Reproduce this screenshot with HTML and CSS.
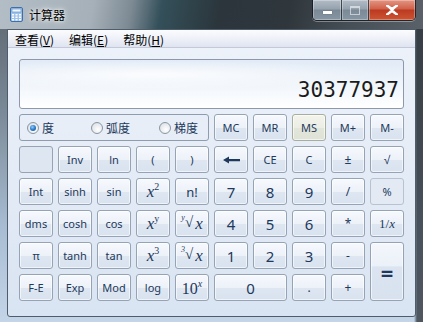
FILE: index.html
```html
<!DOCTYPE html>
<html lang="zh-CN">
<head>
    <meta charset="UTF-8">
    <title>计算器</title>
    <link rel="stylesheet" href="styles.css">
</head>
<body>
    <div class="window">
        <!-- Barre de titre -->
        <div class="titlebar">
            <svg class="app-icon" width="13" height="15" viewBox="0 0 13 15">
                <rect x="0.5" y="0.5" width="12" height="14" rx="1.5" fill="#9fc3ea" stroke="#3f6fa8"/>
                <rect x="2" y="2" width="9" height="3" fill="#eef6ff" stroke="#5c86b8" stroke-width="0.6"/>
                <g fill="#ffffff">
                    <rect x="2" y="7" width="2" height="1.5"/><rect x="5.5" y="7" width="2" height="1.5"/><rect x="9" y="7" width="2" height="1.5"/>
                    <rect x="2" y="9.5" width="2" height="1.5"/><rect x="5.5" y="9.5" width="2" height="1.5"/><rect x="9" y="9.5" width="2" height="1.5"/>
                    <rect x="2" y="12" width="2" height="1.5"/><rect x="5.5" y="12" width="2" height="1.5"/><rect x="9" y="12" width="2" height="1.5"/>
                </g>
            </svg>
            <span class="title">计算器</span>
            <div class="caption-buttons">
                <div class="cap cap-min"><span class="min-glyph"></span></div>
                <div class="cap cap-max"><span class="max-glyph"></span></div>
                <div class="cap cap-close">
                    <svg width="12" height="10" viewBox="0 0 12 10">
                        <path d="M1 0.5 L6 4 L11 0.5 M1 9.5 L6 6 L11 9.5 M2 1 L10 9 M10 1 L2 9" stroke="#ffffff" stroke-width="2.4" fill="none" stroke-linecap="round"/>
                    </svg>
                </div>
            </div>
        </div>

        <div class="client">
            <div class="menubar">
                <span class="menu">查看(<u>V</u>)</span>
                <span class="menu">编辑(<u>E</u>)</span>
                <span class="menu">帮助(<u>H</u>)</span>
            </div>

            <div class="content">
                <div class="display">30377937</div>

                <div class="keys">
                    <div class="angle">
                        <label class="radio r1"><span class="dot checked"></span>度</label>
                        <label class="radio r2"><span class="dot"></span>弧度</label>
                        <label class="radio r3"><span class="dot"></span>梯度</label>
                    </div>
                    <button class="key">MC</button>
                    <button class="key">MR</button>
                    <button class="key hot">MS</button>
                    <button class="key">M+</button>
                    <button class="key">M-</button>

                    <button class="key flat"></button>
                    <button class="key">Inv</button>
                    <button class="key">ln</button>
                    <button class="key">(</button>
                    <button class="key">)</button>
                    <button class="key">
                        <svg width="17" height="8" viewBox="0 0 17 8"><path d="M0 4 L6 0.5 V3 H17 V5.2 H6 V7.5 Z" fill="#1e395b"/></svg>
                    </button>
                    <button class="key">CE</button>
                    <button class="key">C</button>
                    <button class="key op">±</button>
                    <button class="key op">√</button>

                    <button class="key">Int</button>
                    <button class="key">sinh</button>
                    <button class="key">sin</button>
                    <button class="key"><span class="m">x<sup>2</sup></span></button>
                    <button class="key big">n!</button>
                    <button class="key num">7</button>
                    <button class="key num">8</button>
                    <button class="key num">9</button>
                    <button class="key op">/</button>
                    <button class="key flat light">%</button>

                    <button class="key">dms</button>
                    <button class="key">cosh</button>
                    <button class="key">cos</button>
                    <button class="key"><span class="m">x<sup>y</sup></span></button>
                    <button class="key"><span class="root"><sup>y</sup>√<i>x</i></span></button>
                    <button class="key num">4</button>
                    <button class="key num">5</button>
                    <button class="key num">6</button>
                    <button class="key op">*</button>
                    <button class="key"><span class="inv">1/<i>x</i></span></button>

                    <button class="key">π</button>
                    <button class="key">tanh</button>
                    <button class="key">tan</button>
                    <button class="key"><span class="m">x<sup>3</sup></span></button>
                    <button class="key"><span class="root"><sup>3</sup>√<i>x</i></span></button>
                    <button class="key num">1</button>
                    <button class="key num">2</button>
                    <button class="key num">3</button>
                    <button class="key op">-</button>
                    <button class="key equals">=</button>

                    <button class="key">F-E</button>
                    <button class="key">Exp</button>
                    <button class="key">Mod</button>
                    <button class="key">log</button>
                    <button class="key"><span class="ten">10<sup>x</sup></span></button>
                    <button class="key num zero">0</button>
                    <button class="key op">.</button>
                    <button class="key op">+</button>
                </div>
            </div>
        </div>
    </div>
</body>
</html>
```

FILE: styles.css
```css
/* Fenêtre */
body {
    margin: 0;
    width: 423px;
    height: 322px;
    overflow: hidden;
    font-family: "Noto Sans", "Noto Sans CJK SC", sans-serif;
}

.window {
    width: 423px;
    height: 322px;
    display: flex;
    flex-direction: column;
    box-sizing: border-box;
    background:
        linear-gradient(to right, rgba(0,0,0,0) 414px, rgba(40,46,52,0.75) 417px),
        linear-gradient(to bottom, #5a646d 0%, #7b8a98 35%, #a7bcd2 70%, #c4d5e8 100%);
}

/* Barre de titre */
.titlebar {
    height: 29px;
    flex-shrink: 0;
    display: flex;
    align-items: flex-start;
    background: linear-gradient(100deg, #b3bdc5 0%, #a6b0b8 22%, #7d8a94 31%, #34505a 38%, #2b353b 52%, #2f373d 68%, #464e55 82%, #5a6168 100%);
}

.app-icon {
    margin: 7px 0 0 10px;
}

.title {
    margin: 6px 0 0 6px;
    font: 12px "Noto Sans CJK SC", sans-serif;
    color: #000;
    text-shadow: 0 0 6px #fff, 0 0 3px rgba(255,255,255,0.9);
}

.caption-buttons {
    margin-left: auto;
    margin-right: 7px;
    display: flex;
    height: 20px;
    border: 1px solid rgba(20,25,30,0.8);
    border-top: none;
    border-radius: 0 0 5px 5px;
    overflow: hidden;
    box-shadow: 0 1px 0 rgba(255,255,255,0.35);
}

.cap {
    height: 20px;
    display: flex;
    align-items: center;
    justify-content: center;
    box-shadow: inset 0 0 0 1px rgba(255,255,255,0.3);
}

.cap-min, .cap-max {
    background: linear-gradient(to bottom, #b2bcc6 0%, #95a2ae 45%, #7b8996 50%, #8796a4 100%);
    border-right: 1px solid rgba(20,25,30,0.7);
}

.cap-min { width: 28px; }
.cap-max { width: 26px; }

.cap-close {
    width: 46px;
    background: linear-gradient(to bottom, #e39582 0%, #d0604a 45%, #bc3a20 50%, #cc5535 100%);
}

.min-glyph {
    width: 9px;
    height: 3px;
    margin-top: 5px;
    background: #fff;
    box-shadow: 0 0 1px #333;
}

.max-glyph {
    width: 8px;
    height: 6px;
    border: 1px solid rgba(255,255,255,0.55);
    border-top-width: 2px;
}

/* Zone client */
.client {
    flex: 1;
    margin: 0 7px 5px 7px;
    border: 1px solid #4f5d6b;
    border-radius: 0 0 3px 3px;
    display: flex;
    flex-direction: column;
    background: linear-gradient(to bottom, #eef3fa 0%, #e6edf7 40%, #d9e4f2 100%);
}

.menubar {
    height: 18px;
    flex-shrink: 0;
    display: flex;
    align-items: center;
    gap: 15px;
    padding: 1px 0 0 7px;
    box-sizing: border-box;
    border-bottom: 1px solid #c3c9d8;
    background: linear-gradient(to bottom, #fbfcfe 0%, #eef1f8 50%, #dfe4f0 100%);
}

.menu {
    font: 12px "Noto Sans CJK SC", sans-serif;
    color: #000;
}

.menu u {
    text-decoration-thickness: 1px;
}

.content {
    padding: 11px 11px 0 11px;
}

/* Écran */
.display {
    height: 50px;
    box-sizing: border-box;
    border: 1px solid #8d99aa;
    border-radius: 3px;
    padding: 0 4px 6px 0;
    display: flex;
    align-items: flex-end;
    justify-content: flex-end;
    font: 21px/24px "DejaVu Sans Mono", monospace;
    color: #1b1b1b;
    background:
        radial-gradient(ellipse 60% 30% at 35% 30%, rgba(255,255,255,0.8), rgba(255,255,255,0)),
        linear-gradient(to bottom, #e1eaf6 0%, #edf3fa 40%, #ffffff 100%);
}

/* Clavier */
.keys {
    margin-top: 5px;
    display: grid;
    grid-template-columns: repeat(10, 34px);
    grid-template-rows: repeat(6, 27px);
    gap: 5px;
}

.angle {
    grid-column: span 5;
    border: 1px solid #8e9cad;
    border-radius: 3px;
    display: flex;
    align-items: center;
    font: 12px "Noto Sans CJK SC", sans-serif;
    color: #1e395b;
}

.radio {
    display: flex;
    align-items: center;
    gap: 3px;
}

.r1 { margin-left: 7px; }
.r2 { margin-left: 37px; }
.r3 { margin-left: 29px; }

.dot {
    width: 12px;
    height: 12px;
    box-sizing: border-box;
    border-radius: 50%;
    border: 1px solid #8a96a3;
    background: radial-gradient(circle at 60% 65%, #ffffff 0%, #e6e9ed 60%, #cfd4da 100%);
    display: flex;
    align-items: center;
    justify-content: center;
}

.dot.checked::after {
    content: "";
    width: 6px;
    height: 6px;
    border-radius: 50%;
    background: radial-gradient(circle at 40% 35%, #8fd0ff 0%, #2d7cc8 50%, #174d86 100%);
}

.key {
    padding: 0;
    border: 1px solid #95a3b5;
    border-radius: 3px;
    display: flex;
    align-items: center;
    justify-content: center;
    color: #1e395b;
    font: 11px "Noto Sans", sans-serif;
    background: linear-gradient(to bottom, #f6f9fd 0%, #edf2f9 50%, #dde6f1 52%, #d9e3ef 100%);
    box-shadow: inset 0 0 0 1px rgba(255,255,255,0.6);
}

.key.hot {
    border-color: #a8ae9e;
    background: linear-gradient(to bottom, #f3f3ec 0%, #eceee5 50%, #e2e5da 52%, #dfe2d6 100%);
}

.key.flat {
    background: #dde6f1;
    box-shadow: none;
}

.key.light {
    border-color: #b7c3d2;
    background: #e3eaf4;
}

.key.num {
    font-size: 15px;
}

.key.op {
    font-size: 12px;
}

.key.big {
    font-size: 13px;
}

.key.zero {
    grid-column: span 2;
}

.key.equals {
    grid-row: span 2;
    font-size: 22px;
    font-weight: bold;
    background: linear-gradient(to bottom, #f4f7fc 0%, #ebf1f8 40%, #dbe4f0 42%, #d8e2ef 100%);
}

.m {
    font: italic 17px "Liberation Serif", serif;
    color: #1e395b;
}

.m sup {
    font-size: 10px;
    font-style: normal;
    vertical-align: 7px;
}

.root {
    font: 15px "Liberation Serif", serif;
    display: flex;
    align-items: flex-start;
}

.root sup {
    font-style: italic;
    font-size: 8px;
    line-height: 8px;
}

.root i {
    margin-left: 2px;
    font-size: 17px;
}

.ten {
    font: 16px "Liberation Serif", serif;
}

.ten sup {
    font-style: italic;
    font-size: 10px;
    vertical-align: 7px;
}

.inv {
    font: 13px "Liberation Serif", serif;
}
```
